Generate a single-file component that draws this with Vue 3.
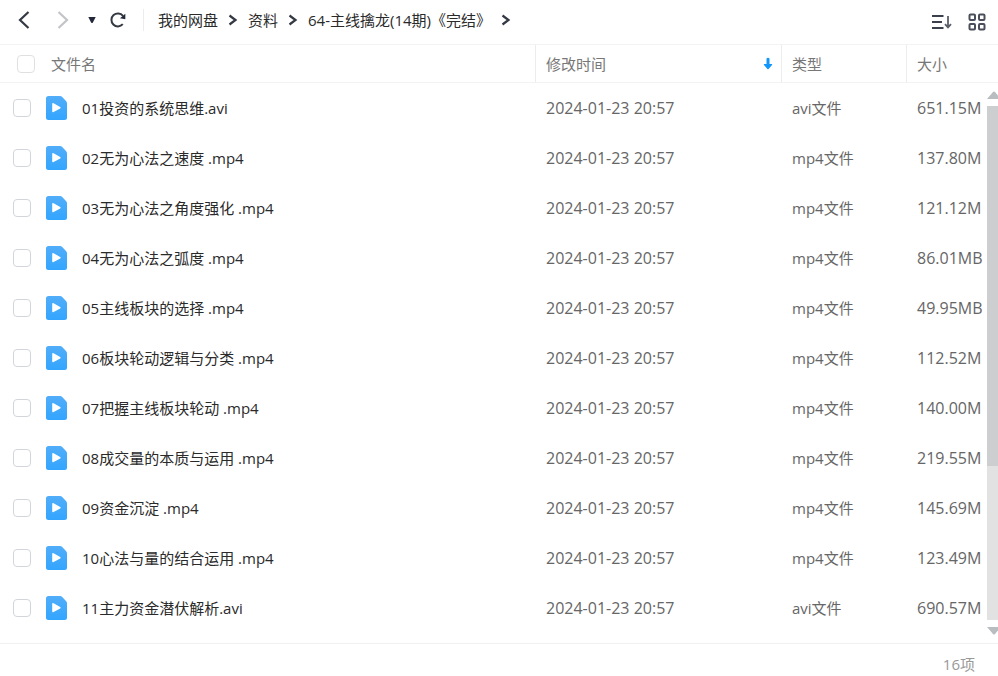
<script setup>
import { ref } from 'vue'

const crumbs = ['我的网盘', '资料', '64-主线擒龙(14期)《完结》']
const time = '2024-01-23 20:57'
const files = [
  ['01投资的系统思维.avi', 'avi文件', '651.15M'],
  ['02无为心法之速度 .mp4', 'mp4文件', '137.80M'],
  ['03无为心法之角度强化 .mp4', 'mp4文件', '121.12M'],
  ['04无为心法之弧度 .mp4', 'mp4文件', '86.01MB'],
  ['05主线板块的选择 .mp4', 'mp4文件', '49.95MB'],
  ['06板块轮动逻辑与分类 .mp4', 'mp4文件', '112.52M'],
  ['07把握主线板块轮动 .mp4', 'mp4文件', '140.00M'],
  ['08成交量的本质与运用 .mp4', 'mp4文件', '219.55M'],
  ['09资金沉淀 .mp4', 'mp4文件', '145.69M'],
  ['10心法与量的结合运用 .mp4', 'mp4文件', '123.49M'],
  ['11主力资金潜伏解析.avi', 'avi文件', '690.57M'],
].map(([name, type, size]) => ({ name, type, size }))

const selected = ref([])
function toggleAll(e) {
  selected.value = e.target.checked ? files.map((f) => f.name) : []
}
</script>

<template>
  <div class="app">
    <header class="toolbar">
      <div class="nav">
        <button type="button" class="arrow" aria-label="后退">
          <svg width="14" height="20" viewBox="0 0 14 20"><path d="M11.500 2 3 10l8.500 8" fill="none" stroke="#343943" stroke-width="2.200" /></svg>
        </button>
        <button type="button" class="arrow forward" aria-label="前进" disabled>
          <svg width="14" height="20" viewBox="0 0 14 20"><path d="m1.500 2 8.500 8-8.500 8" fill="none" stroke="#c3c4c7" stroke-width="2.200" /></svg>
        </button>
        <button type="button" class="history" aria-label="历史">
          <svg width="8" height="8" viewBox="0 0 8 8"><path d="M.3 1h7.400L4.900 6.600q-.9 1-1.800 0Z" fill="#23283a" /></svg>
        </button>
        <button type="button" class="refresh" aria-label="刷新">
          <svg width="18" height="18" viewBox="0 0 18 18">
            <path d="M13.800 13.200A6.500 6.500 0 1 1 14 4.800" fill="none" stroke="#343943" stroke-width="2" />
            <path d="M16.300 2.800v5.500l-5.300-1Z" fill="#23283a" />
          </svg>
        </button>
      </div>
      <nav class="crumbs">
        <template v-for="c in crumbs" :key="c">
          <a href="#">{{ c }}</a>
          <svg width="10" height="12" viewBox="0 0 10 12"><path d="m1.500 1.500 6 4.500-6 4.500" fill="none" stroke="#343943" stroke-width="2.200" /></svg>
        </template>
      </nav>
      <div class="views">
        <button type="button" aria-label="排序">
          <svg width="22" height="18" viewBox="0 0 22 18">
            <path d="M1 3h11.500M1 9h10M1 15h11.500" stroke="#3b404d" stroke-width="2" fill="none" />
            <path d="M17 3v11M14 11.200l3 3.200 3-3.200" stroke="#5a5f69" stroke-width="1.800" fill="none" />
          </svg>
        </button>
        <button type="button" aria-label="网格">
          <svg width="18" height="18" viewBox="0 0 18 18" fill="none" stroke="#4a4e5b" stroke-width="2">
            <rect x="1.500" y="1.500" width="5.500" height="5.500" rx="1" /><rect x="11" y="1.500" width="5.500" height="5.500" rx="1" />
            <rect x="1.500" y="11" width="5.500" height="5.500" rx="1" /><rect x="11" y="11" width="5.500" height="5.500" rx="1" />
          </svg>
        </button>
      </div>
    </header>

    <main class="list">
      <table>
        <colgroup>
          <col /><col class="col-time" /><col class="col-type" /><col class="col-size" />
        </colgroup>
        <thead>
          <tr>
            <th>
              <div class="head-name">
                <input id="all" type="checkbox" :checked="selected.length === files.length" @change="toggleAll" />
                <label for="all">文件名</label>
              </div>
            </th>
            <th>
              <div class="head-time">
                <span>修改时间</span>
                <svg width="10" height="13" viewBox="0 0 10 13"><path d="M3.500 1.500q1.500-1.500 3 0V7h2.200q1 0 .3 1L5.600 12q-.6.600-1.200 0L1 8q-.7-1 .3-1h2.200Z" fill="#1296fa" /></svg>
              </div>
            </th>
            <th>类型</th>
            <th>大小</th>
          </tr>
        </thead>
        <tbody>
          <tr v-for="(f, i) in files" :key="f.name">
            <td>
              <div class="name">
                <input :id="'f' + i" v-model="selected" type="checkbox" :value="f.name" />
                <svg width="21" height="25" viewBox="0 0 21 25">
                  <defs>
                    <linearGradient :id="'g' + i" x1="0" y1="0" x2="0" y2="1">
                      <stop offset="0" stop-color="#51adf9" /><stop offset="1" stop-color="#33a5ff" />
                    </linearGradient>
                  </defs>
                  <path d="M2.500 0H14q1.200 0 2 .8l4.200 4.400q.8.800.8 2V21.500q0 2.500-2.500 2.500h-16Q0 24 0 21.500v-19Q0 0 2.500 0Z" :fill="`url(#g${i})`" />
                  <path d="M6.200 8q0-1.500 1.400-.8l6.600 3.800q1 .7 0 1.400l-6.600 3.600q-1.400.6-1.400-.8Z" fill="#fff" />
                </svg>
                <label :for="'f' + i">{{ f.name }}</label>
              </div>
            </td>
            <td class="num">{{ time }}</td>
            <td>{{ f.type }}</td>
            <td class="num">{{ f.size }}</td>
          </tr>
        </tbody>
      </table>
      <div class="scrollbar">
        <svg width="12" height="8" viewBox="0 0 12 8"><path d="M0 8 6 1q1-1 2 0l6 7Z" fill="#b9bdc0" /></svg>
        <div class="track"><div class="thumb"></div></div>
        <svg width="12" height="8" viewBox="0 0 12 8"><path d="M0 0 6 7q1 1 2 0l6-7Z" fill="#b9bdc0" /></svg>
      </div>
    </main>

    <footer class="status">16项</footer>
  </div>
</template>

<style>
body {
  margin: 0;
  background: #fff;
}
</style>

<style scoped>
.app {
  display: flex;
  flex-direction: column;
  min-height: 100vh;
  font: 15px/20px "Open Sans", "Noto Sans CJK SC", sans-serif;
  color: #666;
}
button {
  display: flex;
  padding: 0;
  border: 0;
  background: none;
}
svg {
  display: block;
  flex: none;
}
.toolbar {
  display: flex;
  align-items: center;
  height: 45px;
  box-sizing: border-box;
  padding: 0 12px 4px 17px;
  border-bottom: 1px solid #f3f3f3;
}
.nav {
  display: flex;
  align-items: center;
  height: 22px;
  padding-right: 16px;
  border-right: 1px solid #ececec;
}
.forward {
  margin-left: 26px;
}
.history {
  margin-left: 17px;
}
.refresh {
  margin-left: 13px;
}
.crumbs {
  display: flex;
  flex: 1;
  align-items: center;
  gap: 10px;
  padding: 0 0 1px 14px;
}
.crumbs a {
  color: #2a2a2a;
  text-decoration: none;
}
.views {
  display: flex;
  gap: 15px;
  padding-top: 4px;
}
.list {
  position: relative;
  flex: 1;
  padding-bottom: 10px;
}
table {
  width: 100%;
  table-layout: fixed;
  border-collapse: separate;
  border-spacing: 0;
}
.col-time {
  width: 246px;
}
.col-type {
  width: 125px;
}
.col-size {
  width: 92px;
}
th,
td {
  box-sizing: border-box;
  padding: 0 0 0 11px;
  text-align: left;
  font-weight: 400;
  white-space: nowrap;
}
th {
  height: 38px;
  padding-left: 10px;
  border-bottom: 1px solid #f3f3f3;
  border-left: 1px solid #ececec;
  color: #777;
}
th:first-child {
  padding-left: 17px;
  border-left: 0;
}
td {
  height: 50px;
}
td:first-child {
  padding-left: 13px;
}
.num {
  font-size: 16px;
}
.head-name {
  display: flex;
  align-items: center;
  gap: 16px;
}
.head-time {
  display: flex;
  align-items: center;
  justify-content: space-between;
  padding-right: 8px;
}
.name {
  display: flex;
  align-items: center;
}
.name svg {
  margin: 0 15px;
}
.name label {
  color: #2a2a2a;
}
input {
  flex: none;
  appearance: none;
  width: 18px;
  height: 18px;
  margin: 0;
  border: 1px solid #d2d6da;
  border-radius: 4px;
  background: #fff;
}
.head-name input {
  border-color: #e0e0e0;
}
input:checked {
  border-color: #33a5ff;
  background: #33a5ff;
}
.scrollbar {
  position: absolute;
  top: 46px;
  right: 0;
  bottom: 8px;
  display: flex;
  flex-direction: column;
  gap: 7px;
  width: 11px;
  overflow: hidden;
}
.track {
  flex: 1;
  background: #e2e2e2;
}
.thumb {
  height: 70%;
  background: #cdced0;
}
.status {
  padding: 10px 23px 2px;
  border-top: 1px solid #f0f0f0;
  text-align: right;
  color: #999;
}
</style>
